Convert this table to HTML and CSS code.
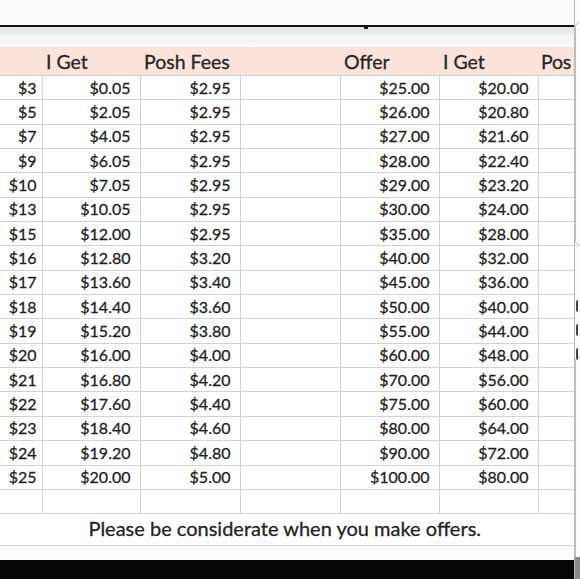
FILE: index.html
```html
<!DOCTYPE html>
<html>
<head>
<meta charset="utf-8">
<link rel="stylesheet" href="styles.css">
</head>
<body>
<div class="screen">
  <div class="top"></div>
  <div class="sheet">
    <div class="band"></div>
    <table class="grid">
      <colgroup>
        <col class="c-a"><col class="c-b"><col class="c-c"><col class="c-d"><col class="c-e"><col class="c-f"><col class="c-g">
      </colgroup>
      <thead>
        <tr class="head">
          <th></th><th>I Get</th><th>Posh Fees</th><th></th><th>Offer</th><th>I Get</th><th class="cut">Pos</th>
        </tr>
      </thead>
      <tbody>
        <tr><td>$3</td><td>$0.05</td><td>$2.95</td><td></td><td>$25.00</td><td>$20.00</td><td></td></tr>
        <tr><td>$5</td><td>$2.05</td><td>$2.95</td><td></td><td>$26.00</td><td>$20.80</td><td></td></tr>
        <tr><td>$7</td><td>$4.05</td><td>$2.95</td><td></td><td>$27.00</td><td>$21.60</td><td></td></tr>
        <tr><td>$9</td><td>$6.05</td><td>$2.95</td><td></td><td>$28.00</td><td>$22.40</td><td></td></tr>
        <tr><td>$10</td><td>$7.05</td><td>$2.95</td><td></td><td>$29.00</td><td>$23.20</td><td></td></tr>
        <tr><td>$13</td><td>$10.05</td><td>$2.95</td><td></td><td>$30.00</td><td>$24.00</td><td></td></tr>
        <tr><td>$15</td><td>$12.00</td><td>$2.95</td><td></td><td>$35.00</td><td>$28.00</td><td></td></tr>
        <tr><td>$16</td><td>$12.80</td><td>$3.20</td><td></td><td>$40.00</td><td>$32.00</td><td></td></tr>
        <tr><td>$17</td><td>$13.60</td><td>$3.40</td><td></td><td>$45.00</td><td>$36.00</td><td></td></tr>
        <tr><td>$18</td><td>$14.40</td><td>$3.60</td><td></td><td>$50.00</td><td>$40.00</td><td></td></tr>
        <tr><td>$19</td><td>$15.20</td><td>$3.80</td><td></td><td>$55.00</td><td>$44.00</td><td></td></tr>
        <tr><td>$20</td><td>$16.00</td><td>$4.00</td><td></td><td>$60.00</td><td>$48.00</td><td></td></tr>
        <tr><td>$21</td><td>$16.80</td><td>$4.20</td><td></td><td>$70.00</td><td>$56.00</td><td></td></tr>
        <tr><td>$22</td><td>$17.60</td><td>$4.40</td><td></td><td>$75.00</td><td>$60.00</td><td></td></tr>
        <tr><td>$23</td><td>$18.40</td><td>$4.60</td><td></td><td>$80.00</td><td>$64.00</td><td></td></tr>
        <tr><td>$24</td><td>$19.20</td><td>$4.80</td><td></td><td>$90.00</td><td>$72.00</td><td></td></tr>
        <tr><td>$25</td><td>$20.00</td><td>$5.00</td><td></td><td>$100.00</td><td>$80.00</td><td></td></tr>
        <tr class="empty"><td></td><td></td><td></td><td></td><td></td><td></td><td></td></tr>
        <tr class="note"><td colspan="7">Please be considerate when you make offers.</td></tr>
      </tbody>
    </table>
    <div class="tail"></div>
  </div>
  <div class="bottom"></div>
  <div class="edge">
    <div class="edge-box one"></div>
    <div class="edge-box two"></div>
    <div class="edge-mark m1"></div>
    <div class="edge-mark m2"></div>
    <div class="edge-mark m3"></div>
    <div class="edge-foot"></div>
  </div>
  <div class="dot"></div>
</div>
</body>
</html>
```
FILE: styles.css
```css
html, body {
  margin: 0;
  padding: 0;
  background: #fafafa;
}

.screen {
  position: relative;
  width: 580px;
  height: 579px;
  overflow: hidden;
  background: #fbfbfb;
  font-family: "Lato", "Open Sans", sans-serif;
  color: #1f1f1f;
  display: flex;
  flex-direction: column;
}

.top {
  height: 25px;
  flex: none;
  background: #fbfbfb;
}

.sheet {
  width: 575px;
  border-top: 2px solid #111;
  background: #fff;
  flex: none;
}

.band {
  height: 20px;
  background: linear-gradient(#e4e4e4 0, #eaeaea 6px, #f5f5f5 9px, #f8f8f8 100%);
}

.grid {
  width: 575px;
  border-collapse: collapse;
  table-layout: fixed;
  font-size: 16px;
}

.c-a { width: 42px; }
.c-b { width: 98px; }
.c-c { width: 100px; }
.c-d { width: 100px; }
.c-e { width: 99px; }
.c-f { width: 99px; }
.c-g { width: 37px; }

.head th {
  height: 28px;
  padding: 0 0 0 4px;
  background: #fbe3da;
  text-align: left;
  font-weight: 400;
  font-size: 19.5px;
  color: #262626;
  white-space: nowrap;
  vertical-align: middle;
  -webkit-text-stroke: 0.3px #262626;
}

.head th.cut {
  padding-left: 3px;
  letter-spacing: -0.3px;
}

tbody td {
  height: 23.35px;
  padding: 0 9px 0 0;
  border: 1px solid #d2d2d2;
  text-align: right;
  white-space: nowrap;
  vertical-align: middle;
  line-height: 18px;
  -webkit-text-stroke: 0.3px #1f1f1f;
}

tbody td:first-child {
  padding-right: 5px;
  border-left: none;
}

tbody td:last-child {
  border-right: 1px solid #bdbdbd;
}

.empty td {
  height: 23px;
}

.note td {
  height: 28px;
  text-align: center;
  padding: 0 0 3px 0;
  font-size: 20px;
  border-left: none;
  color: #262626;
}

.tail {
  height: 14px;
  background: #fdfdfd;
}

.bottom {
  flex: 1;
  background: #050505;
}

.edge {
  position: absolute;
  top: 0;
  right: 0;
  width: 5px;
  height: 579px;
  overflow: hidden;
  background: #fafafa;
  border-left: 1px solid #b8b8b8;
}

.edge-box {
  position: absolute;
  left: 0;
  width: 20px;
  border: 1px solid #bfbfbf;
  border-radius: 5px;
  background: #fcfcfc;
}

.edge-box.one {
  top: 22px;
  height: 222px;
}

.edge-box.two {
  top: 356px;
  height: 240px;
}

.edge-mark {
  position: absolute;
  left: 1px;
  width: 3px;
  height: 12px;
  border-left: 2px solid #444;
  border-radius: 2px 0 0 2px;
}

.m1 { top: 300px; }
.m2 { top: 324px; }
.m3 { top: 348px; }

.edge-foot {
  position: absolute;
  left: 0;
  right: 0;
  top: 557px;
  bottom: 0;
  background: #8a8a8a;
}

.dot {
  position: absolute;
  top: 26px;
  left: 364px;
  width: 4px;
  height: 3px;
  background: #111;
  border-radius: 1px;
}
```
